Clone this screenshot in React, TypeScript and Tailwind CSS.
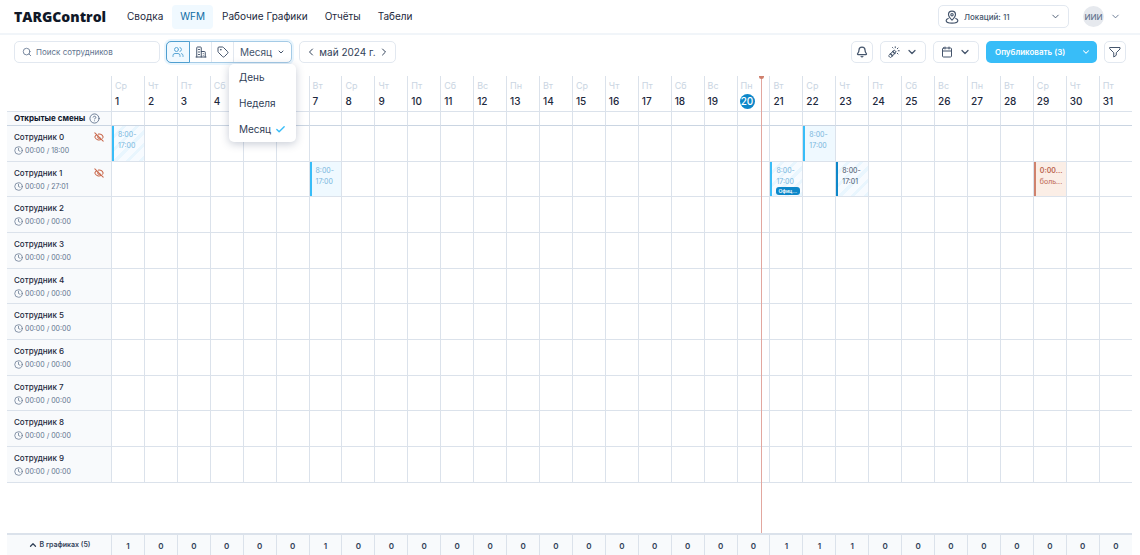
import type { ReactNode } from "react"
import { Bell, Calendar, Check, ChevronDown, ChevronLeft, ChevronRight, ChevronUp, CircleHelp, Clock, EyeOff, Search, Tag, Users } from "lucide-react"
import clsx from "clsx"

const NAV = ["Сводка", "WFM", "Рабочие Графики", "Отчёты", "Табели"]
const WEEKDAYS = ["Пн", "Вт", "Ср", "Чт", "Пт", "Сб", "Вс"]
const DAYS = Array.from({ length: 31 }, (_, i) => ({ num: i + 1, name: WEEKDAYS[(i + 2) % 7] }))
const TOTALS: Record<number, number> = { 1: 1, 7: 1, 21: 1, 22: 1, 23: 1 }
const TODAY = 20
const NOW = 19.75

type Shift = { lines: string[]; kind: "plain" | "striped" | "published" | "sick"; badge?: string }
type Employee = { name: string; hours: string; hidden?: boolean; shifts: Record<number, Shift> }

const EMPLOYEES: Employee[] = [
  {
    name: "Сотрудник 0",
    hours: "00:00 / 18:00",
    hidden: true,
    shifts: {
      1: { lines: ["8:00-", "17:00"], kind: "striped" },
      22: { lines: ["8:00-", "17:00"], kind: "plain" },
    },
  },
  {
    name: "Сотрудник 1",
    hours: "00:00 / 27:01",
    hidden: true,
    shifts: {
      7: { lines: ["8:00-", "17:00"], kind: "plain" },
      21: { lines: ["8:00-", "17:00"], kind: "striped", badge: "Офиц..." },
      23: { lines: ["8:00-", "17:01"], kind: "published" },
      29: { lines: ["0:00...", "боль..."], kind: "sick" },
    },
  },
  ...Array.from({ length: 8 }, (_, i) => ({ name: `Сотрудник ${i + 2}`, hours: "00:00 / 00:00", shifts: {} })),
]

const STRIPES = "bg-[repeating-linear-gradient(135deg,#f7fbff_0px,#f7fbff_6px,#e9f6fe_6px,#e9f6fe_9px)]"

const shiftStyles = {
  plain: "border-[#38bdf8] bg-[#eff9ff] text-[#78b6dd]",
  striped: clsx("border-[#38bdf8] text-[#78b6dd]", STRIPES),
  published: clsx("border-[#0d87c9] text-[#475569]", STRIPES),
  sick: "border-[#cf826d] bg-[#fbeee6] text-[#bb6550]",
}

function BuildingIcon() {
  return (
    <svg viewBox="0 0 24 24" className="size-3" fill="none" stroke="currentColor" strokeWidth="2" strokeLinecap="round" strokeLinejoin="round">
      <path d="M2 22h20M3.500 22V3.500A1.500 1.500 0 0 1 5 2h6a1.500 1.500 0 0 1 1.500 1.500V22M12.500 11H19a1.500 1.500 0 0 1 1.500 1.500V22" />
      <path d="M7 7h2M7 12h2M7 17h2M16.500 15v.01M16.500 18.500v.01" />
    </svg>
  )
}

function PinIcon() {
  return (
    <svg viewBox="0 0 24 24" className="size-[14px]" fill="none" stroke="currentColor" strokeWidth="2" strokeLinecap="round" strokeLinejoin="round">
      <path d="M12 17.500c-3.800-3.800-6-6.200-6-9.700a6 6 0 0 1 12 0c0 3.500-2.200 5.900-6 9.700Z" />
      <circle cx="12" cy="8" r="2" />
      <path d="M5.500 14.500C3.300 15.300 2 16.500 2 18c0 2.500 4.500 4.500 10 4.500s10-2 10-4.500c0-1.500-1.300-2.700-3.500-3.500" />
    </svg>
  )
}

function WandIcon() {
  return (
    <svg viewBox="0 0 24 24" className="size-3" fill="none" stroke="currentColor" strokeWidth="2" strokeLinecap="round" strokeLinejoin="round">
      <path d="m1.500 19 11-11 4 4-11 11z" />
      <path d="m9.500 11 4 4M5 15.500l4 4" strokeWidth="3" />
      <path d="M14.500 3.500v-2M18.500 5.500 20 4M20.500 9.500h2M18.500 14.500l1.500 1.500M10 4 9 3" />
    </svg>
  )
}

function FunnelIcon() {
  return (
    <svg viewBox="0 0 24 24" className="size-3" fill="none" stroke="currentColor" strokeWidth="2" strokeLinecap="round" strokeLinejoin="round">
      <path d="M2 3h20v3L14.500 13.500v5L9.500 22v-8.500L2 6z" />
    </svg>
  )
}

function ToolButton({ label, wide, children }: { label: string; wide?: boolean; children: ReactNode }) {
  return (
    <button
      aria-label={label}
      className={clsx(
        "flex h-[22px] items-center justify-center gap-[6px] rounded-[5px] border border-slate-200 bg-white text-slate-600",
        wide ? "w-[46px]" : "w-[22px]"
      )}
    >
      {children}
      {wide && <ChevronDown className="size-3" strokeWidth={2.5} />}
    </button>
  )
}

function ShiftCard({ shift }: { shift: Shift }) {
  return (
    <div className={clsx("h-full overflow-hidden border-l-2 pt-[3px] pl-1 text-[7px] leading-[11px]", shiftStyles[shift.kind])}>
      {shift.lines.map((line, i) => (
        <div key={line} className={clsx("whitespace-nowrap", shift.kind === "sick" && i === 0 && "font-semibold")}>
          {line}
        </div>
      ))}
      {shift.badge && (
        <div className="mr-[2px] h-2 rounded-[3px] bg-[#0d87c9] px-[2px] text-[5px] leading-[8px] font-semibold text-white">{shift.badge}</div>
      )}
    </div>
  )
}

function Columns() {
  return (
    <colgroup>
      <col className="w-[104px]" />
      {DAYS.map((d) => (
        <col key={d.num} />
      ))}
    </colgroup>
  )
}

export default function App() {
  return (
    <div className="flex min-h-screen flex-col bg-white font-['Inter',sans-serif] text-slate-700">
      <header className="flex h-[35px] items-center border-b-2 border-slate-100 pr-[19px] pl-[14px]">
        <div className="w-[105px] font-['Open_Sans',sans-serif] text-[14px] leading-5 font-extrabold text-[#101828]">TARGControl</div>
        <nav className="flex gap-px text-[10px]">
          {NAV.map((item) => (
            <a
              key={item}
              href="#"
              className={clsx("flex h-6 items-center rounded px-2", item === "WFM" ? "bg-sky-50 text-[#0c6ca5]" : "text-slate-800")}
            >
              {item}
            </a>
          ))}
        </nav>
        <div className="relative ml-auto text-slate-600">
          <span className="pointer-events-none absolute inset-y-0 left-[7px] flex items-center">
            <PinIcon />
          </span>
          <select aria-label="Локации" className="block h-[23px] w-[131px] appearance-none rounded-[5px] border border-slate-200 bg-white pl-[25px] text-[8px] font-medium">
            <option>Локаций: 11</option>
          </select>
          <ChevronDown className="pointer-events-none absolute top-[6px] right-2 size-[11px]" />
        </div>
        <button aria-label="Профиль" className="ml-[14px] flex items-center gap-[6px] text-slate-500">
          <span className="flex size-[21px] items-center justify-center rounded-full bg-[#e6e9ee] text-[8px] font-medium">ИИИ</span>
          <ChevronDown className="size-[11px]" />
        </button>
      </header>

      <div className="flex items-center pt-[6px] pr-[14px] pl-[14px]">
        <label className="flex h-[22px] w-[146px] items-center gap-1 rounded-[5px] border border-slate-200 px-[7px] text-slate-500">
          <Search className="size-[10px] shrink-0" />
          <input aria-label="Поиск сотрудников" placeholder="Поиск сотрудников" className="w-full min-w-0 text-[8px] outline-none placeholder:text-slate-500" />
        </label>

        <div className="relative ml-[6px] flex h-[22px] rounded-[5px] border border-[#a5cbe6] bg-white text-slate-600 ring-2 ring-[#e9f5fd]">
          <button aria-label="Сотрудники" className="-my-px -ml-px flex w-6 items-center justify-center rounded-l-[5px] border border-[#4f9fd0] bg-sky-50 text-[#5ba7d6]">
            <Users className="size-3" />
          </button>
          <button aria-label="Подразделения" className="flex w-[21px] items-center justify-center">
            <BuildingIcon />
          </button>
          <button aria-label="Должности" className="flex w-[22px] items-center justify-center border-l border-slate-200">
            <Tag className="size-3" />
          </button>
          <button aria-haspopup="menu" aria-expanded="true" className="flex w-[58px] items-center justify-between border-l border-slate-200 pr-[6px] pl-[6px] text-[10px]">
            Месяц
            <ChevronDown className="size-2" strokeWidth={3} />
          </button>
          <ul role="menu" className="absolute top-[22px] left-[62px] z-20 w-[67px] rounded-[5px] bg-white text-[10px] text-slate-700 shadow-[0_2px_8px_rgba(30,50,90,0.25)]">
            {["День", "Неделя", "Месяц"].map((item) => (
              <li key={item} role="none">
                <button role="menuitem" className="flex h-[26px] w-full items-center justify-between pr-[10px] pl-[10px]">
                  {item}
                  {item === "Месяц" && <Check className="size-[11px] text-[#38bdf8]" strokeWidth={3} />}
                </button>
              </li>
            ))}
          </ul>
        </div>

        <div className="ml-[7px] flex h-[22px] w-[97px] items-center justify-between rounded-[5px] border border-slate-200 px-[5px] text-[10px]">
          <button aria-label="Предыдущий месяц">
            <ChevronLeft className="size-3" />
          </button>
          май 2024 г.
          <button aria-label="Следующий месяц">
            <ChevronRight className="size-3" />
          </button>
        </div>

        <div className="ml-auto flex gap-[7px]">
          <ToolButton label="Уведомления">
            <Bell className="size-3" strokeWidth={2.5} />
          </ToolButton>
          <ToolButton label="Автозаполнение" wide>
            <WandIcon />
          </ToolButton>
          <ToolButton label="Календарь" wide>
            <Calendar className="size-3" />
          </ToolButton>
          <button className="flex h-[22px] w-[111px] items-center justify-between rounded-[5px] bg-[#38bdf8] pr-[6px] pl-[9px] text-[8px] font-semibold text-white">
            Опубликовать (3)
            <ChevronDown className="size-[10px]" strokeWidth={2.5} />
          </button>
          <ToolButton label="Фильтр">
            <FunnelIcon />
          </ToolButton>
        </div>
      </div>

      <main className="relative mr-2 ml-[7px] mt-[13px] flex-1">
        <table className="w-full table-fixed border-separate border-spacing-0 text-left">
          <Columns />
          <thead>
            <tr className="h-9">
              <th className="border-b border-[#dbe2eb] p-0" />
              {DAYS.map((d) => (
                <th key={d.num} className="border-b border-l border-[#dbe2eb] p-0 pl-[3px] align-top text-[10px] font-medium">
                  <div className="pt-[2px] text-[9px] leading-4 font-normal text-slate-300">{d.name}</div>
                  <div
                    className={clsx(
                      "flex h-[15px] w-[15px] items-center leading-[15px]",
                      d.num === TODAY ? "-ml-px justify-center rounded-full bg-[#0d87c9] text-white" : "text-slate-800"
                    )}
                  >
                    {d.num}
                  </div>
                </th>
              ))}
            </tr>
          </thead>
          <tbody>
            <tr className="h-[14px]">
              <th className="border-b border-slate-300 bg-slate-50 p-0 pl-[7px] text-[8px] leading-[13px] font-bold whitespace-nowrap text-slate-900">
                <span className="flex items-center gap-1">
                  Открытые смены
                  <CircleHelp className="size-[11px] text-slate-500" strokeWidth={2} />
                </span>
              </th>
              {DAYS.map((d) => (
                <td key={d.num} className="border-b border-l border-slate-300 border-l-[#dbe2eb] p-0" />
              ))}
            </tr>
            {EMPLOYEES.map((e, i) => (
              <tr key={e.name} className={i % 3 === 1 ? "h-[35px]" : "h-[36px]"}>
                <th className="border-b border-[#dbe2eb] bg-slate-50 p-0 pr-[7px] pl-[7px] font-normal">
                  <div className="flex items-center justify-between text-[8px] leading-[14px] font-medium text-slate-800">
                    {e.name}
                    {e.hidden && <EyeOff className="size-[10px] text-[#c9694d]" strokeWidth={2.5} />}
                  </div>
                  <div className="flex items-center gap-[2px] text-[7px] leading-[13px] text-slate-500">
                    <Clock className="size-[9px]" strokeWidth={2} />
                    {e.hours}
                  </div>
                </th>
                {DAYS.map((d) => (
                  <td key={d.num} className="h-[inherit] border-b border-l border-[#dbe2eb] p-0">
                    {e.shifts[d.num] && <ShiftCard shift={e.shifts[d.num]} />}
                  </td>
                ))}
              </tr>
            ))}
          </tbody>
        </table>

        {/* current time */}
        <div className="pointer-events-none absolute inset-y-0 right-0 left-[104px]">
          <div className="absolute inset-y-0 w-px bg-[#e2a79f]" style={{ left: `${(NOW / 31) * 100}%` }}>
            <div className="-ml-[2px] h-[3px] w-[5px] rounded-b-full bg-[#cf7f6c]" />
          </div>
        </div>
      </main>

      <footer className="mr-2 ml-[7px]">
        <table className="w-full table-fixed border-separate border-spacing-0 border-t-2 border-[#dbe2eb] bg-slate-50 text-[7px]">
          <Columns />
          <tbody>
            <tr className="h-5">
              <th className="p-0 font-semibold">
                <button className="mx-auto flex items-center gap-[2px]">
                  <ChevronUp className="size-[10px]" strokeWidth={3} />
                  В графиках (5)
                </button>
              </th>
              {DAYS.map((d) => (
                <td key={d.num} className="border-l border-[#dbe2eb] p-0 pt-px text-center text-[8px] font-semibold">
                  {TOTALS[d.num] ?? 0}
                </td>
              ))}
            </tr>
          </tbody>
        </table>
      </footer>
    </div>
  )
}
